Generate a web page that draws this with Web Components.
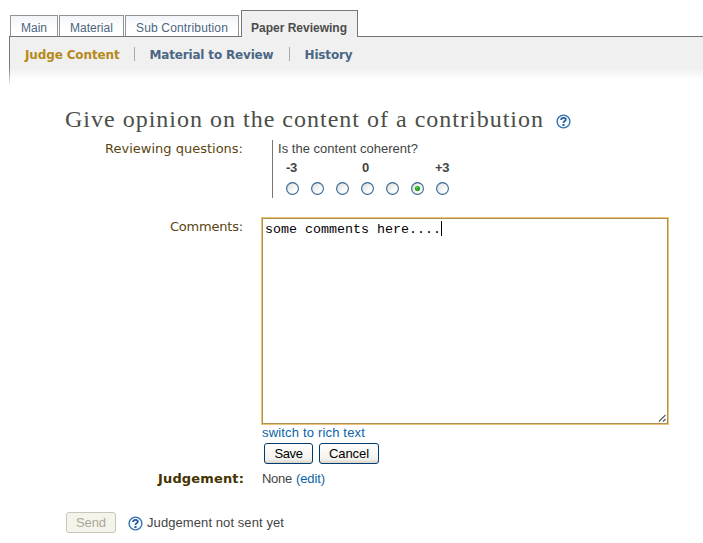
<!DOCTYPE html>
<html lang="en"><head><meta charset="utf-8"><title>Paper Reviewing</title>
<style>body{margin:0;background:#fff;width:703px;height:543px;overflow:hidden;font-family:"Liberation Sans",Arial,sans-serif}</style>
</head><body>
<review-page></review-page>
<script>
const define=(name,html,ready)=>customElements.define(name,class extends HTMLElement{
  connectedCallback(){
    if(this.shadowRoot)return;
    const t=document.createElement('template');t.innerHTML=html;
    this.attachShadow({mode:'open'}).append(t.content.cloneNode(true));
    if(ready)ready(this,this.shadowRoot);
  }
});

// Single line of text tracked to a given advance width (attribute "w").
define('ui-text',`<style>
:host{display:block;white-space:pre;font:13px/15px "Liberation Sans",Arial,sans-serif;flex:none;color:#444}
:host([kind=small]){font-size:12px;line-height:14px;color:#4a6580}
:host([kind=tab]){font-size:12px;line-height:14px;font-weight:bold;color:#4c4c4c}
:host([kind=nav]){font:bold 12px/14px "DejaVu Sans",Verdana,sans-serif;color:#4a6784}
:host([kind=current]){font:bold 12px/14px "DejaVu Sans",Verdana,sans-serif;color:#b58a1b}
:host([kind=title]){font:24px/26px "Liberation Serif","Times New Roman",serif;color:#4b4e48}
:host([kind=label]){font:13px/15px "DejaVu Sans",Verdana,sans-serif;color:#5a4510}
:host([kind=strong]){font:bold 13px/15px "DejaVu Sans",Verdana,sans-serif;color:#453300}
:host([kind=bold]){font-weight:bold}
:host([kind=link]){color:#0b63a5}
:host([kind=black]){color:#000}
:host([kind=off]){color:#aca899}
:host([kind=mono]){font:13.33px/15px "Liberation Mono","Courier New",monospace;color:#000}
span{display:inline-block}</style><span><slot></slot></span>`,(h,r)=>{
  const s=r.querySelector('span'),w=+h.getAttribute('w'),n=h.textContent.length;
  if(w&&n){s.style.letterSpacing=(w-s.getBoundingClientRect().width)/n+'px';h.style.width=w+'px'}
});

define('help-icon',`<style>:host{display:block;width:15px;height:15px;flex:none}svg{display:block}</style>
<svg width="15" height="15" viewBox="0 0 15 15"><circle cx="7.5" cy="7.5" r="6.4" fill="#f4f9fe" stroke="#3473ad" stroke-width="1.4"/><path d="M5.2 6V5.2Q5.5 3.9 7.5 3.9Q9.8 3.9 9.8 5.6Q9.8 6.7 8.6 7.2Q7.5 7.7 7.5 8.9" fill="none" stroke="#235c98" stroke-width="1.8"/><rect x="6.5" y="10" width="2" height="2" fill="#235c98"/></svg>`);

define('tab-item',`<style>
:host{display:flex;box-sizing:border-box;height:21px;border:1px solid #949494;border-bottom:0;padding:5px 0 0 10px;background:linear-gradient(#f1f5f8,#fff 65%);flex:none}
:host([active]){height:27px;margin:0 0 -1px 1px;border-color:#777;background:#f0f0f0;padding:10px 0 0 9px}
</style><slot></slot>`);

define('tab-bar',`<style>
:host{display:flex;height:26px;align-items:flex-end;gap:1px;padding:10px 0 0 10px;position:relative;z-index:1}
</style><slot></slot>`);

define('sub-nav',`<style>
:host{display:flex;box-sizing:border-box;height:52px;margin:0 0 -2px 9px;padding:11px 0 0 16px;border-top:1px solid #747474;
background:linear-gradient(#777,#777 30px,#fff 50px) left/1px 100% no-repeat,linear-gradient(#f0f0f0,#f0f0f0 31px,#fff 43px)}
i{display:block;width:1px;height:14px;margin:-1px 15px 0;background:#aaa;flex:none}
i:first-of-type{margin-left:14px}
</style><ui-text kind="current" w="94.5">Judge Content</ui-text><i></i><ui-text kind="nav" w="124">Material to Review</ui-text><i></i><ui-text kind="nav" w="48">History</ui-text>`);

define('radio-dot',`<style>:host{display:block;width:13px;height:13px}svg{display:block}.on{display:none}:host([checked]) .on{display:block}</style>
<svg width="13" height="13"><defs><linearGradient id="g" x1="0" y1="0" x2="1" y2="1"><stop stop-color="#d9d9d4"/><stop offset=".7" stop-color="#fff"/></linearGradient></defs><circle cx="6.5" cy="6.5" r="5.9" fill="url(#g)" stroke="#376798" stroke-width="1.15"/><g class="on"><circle cx="6.5" cy="6.5" r="2.6" fill="#25a325"/><circle cx="5.8" cy="5.8" r="1" fill="#62d45d"/></g></svg>`);

define('question-scale',`<style>
:host{display:block;box-sizing:border-box;height:58px;width:200px;border-left:1px solid #777;padding:1px 0 0 5px}
.marks{display:grid;grid-template-columns:76px 73px 30px;padding:4px 0 0 8px}
.dots{display:flex;gap:12px;padding:7px 0 0 8px}
</style><ui-text w="140">Is the content coherent?</ui-text>
<div class="marks"><ui-text kind="bold" w="11">-3</ui-text><ui-text kind="bold" w="7">0</ui-text><ui-text kind="bold" w="14">+3</ui-text></div>
<div class="dots"><radio-dot></radio-dot><radio-dot></radio-dot><radio-dot></radio-dot><radio-dot></radio-dot><radio-dot></radio-dot><radio-dot checked></radio-dot><radio-dot></radio-dot></div>`);

define('comment-box',`<style>
:host{display:flex;box-sizing:border-box;width:408px;height:208px;border:1px solid #ecc473;outline:1px solid #ad9052;outline-offset:-2px;padding:3px 1px 1px 3px;background:#fff}
ui-text{margin-top:1px}
b{display:block;width:1px;height:15px;background:#000}
svg{display:block;margin:auto 0 0 auto}
</style><ui-text kind="mono" w="176">some comments here....</ui-text><b></b>
<svg width="9" height="9"><path d="M1 7.5L7.5 1M5 7.5L7.5 5" stroke="#555" stroke-width="1.1" fill="none"/></svg>`);

define('push-button',`<style>
:host{display:flex;box-sizing:border-box;height:21px;border:1px solid #003c74;border-radius:3px;padding:2px 0 0;justify-content:center;background:linear-gradient(#fff,#f2f1ec 80%,#d9d3c7);flex:none}
:host([disabled]){border-color:#c9c7ba;background:#f5f4ea}
</style><slot></slot>`);

define('form-row',`<style>
:host{display:grid;grid-template-columns:244px 1fr;align-items:start}
.l{display:flex;justify-content:flex-end}
</style><div class="l"><slot name="label"></slot></div><div><slot></slot></div>`);

define('review-page',`<style>
:host{display:flex;flex-direction:column;width:703px;height:543px}
.title{display:flex;padding:20px 0 0 65px;height:26px}
.title help-icon{margin:8px 0 0 12px}
.pad1{padding:1px 1px 0 0}
.pad2{padding:2px 1px 0 0}
.q{margin:8px 0 0}
.q question-scale{margin-left:28px}
.c{margin-top:19px}
.c comment-box,.val,.switch{margin-left:17px}
.switch{padding-left:1px}
.btns{display:flex;gap:6px;margin:3px 0 0 20px}
.val{display:flex;gap:4px;padding-left:1px}
.j{margin-top:7px}
.foot{display:flex;margin:26px 0 0 66px;align-items:flex-start}
.foot help-icon{margin:4px 4px 0 12px}
.foot>ui-text{margin-top:3px}
</style>
<tab-bar><tab-item style="width:48px"><ui-text kind="small" w="26">Main</ui-text></tab-item><tab-item style="width:65px"><ui-text kind="small" w="43">Material</ui-text></tab-item><tab-item style="width:114px"><ui-text kind="small" w="92">Sub Contribution</ui-text></tab-item><tab-item active style="width:117px"><ui-text kind="tab" w="96">Paper Reviewing</ui-text></tab-item></tab-bar>
<sub-nav></sub-nav>
<div class="title"><ui-text kind="title" w="479">Give opinion on the content of a contribution</ui-text><help-icon></help-icon></div>
<form-row class="q"><ui-text slot="label" class="pad1" kind="label" w="138">Reviewing questions:</ui-text><question-scale></question-scale></form-row>
<form-row class="c"><ui-text slot="label" class="pad2" kind="label" w="73">Comments:</ui-text><comment-box></comment-box><div class="switch"><ui-text kind="link" w="103">switch to rich text</ui-text></div><div class="btns"><push-button style="width:49px"><ui-text kind="black" w="28">Save</ui-text></push-button><push-button style="width:60px"><ui-text kind="black" w="40">Cancel</ui-text></push-button></div></form-row>
<form-row class="j"><ui-text slot="label" kind="strong" w="86">Judgement:</ui-text><div class="val"><ui-text w="30">None</ui-text><ui-text kind="link" w="29">(edit)</ui-text></div></form-row>
<div class="foot"><push-button disabled style="width:50px"><ui-text kind="off" w="30">Send</ui-text></push-button><help-icon></help-icon><ui-text w="137">Judgement not sent yet</ui-text></div>`);
</script></body></html>
